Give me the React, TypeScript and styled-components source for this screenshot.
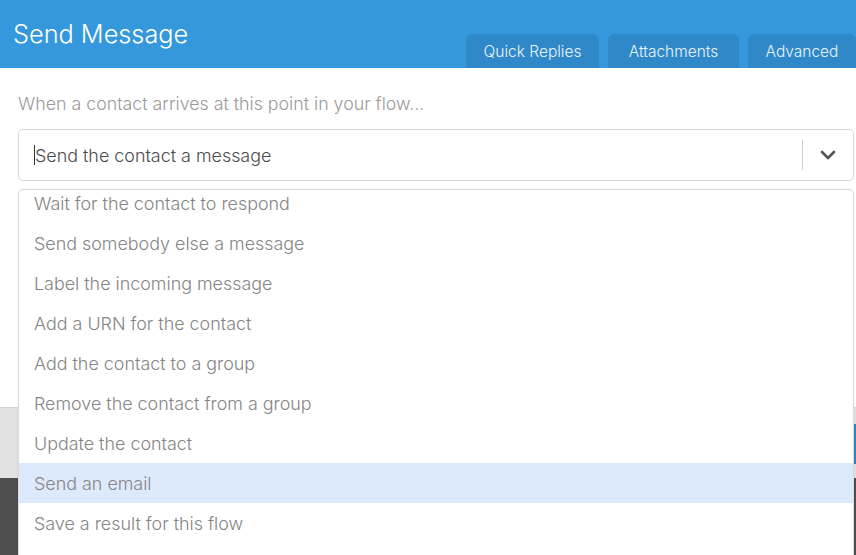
import React from "react";
import styled, { createGlobalStyle } from "styled-components";

const Global = createGlobalStyle`
  html, body { margin: 0; padding: 0; }
  body {
    width: 856px;
    height: 555px;
    overflow: hidden;
    background: #4f4f4f;
    font-family: Inter, Roboto, Arial, sans-serif;
    font-weight: 300;
  }
  * { box-sizing: border-box; }
`;

const Page = styled.div`
  position: relative;
  width: 856px;
  height: 555px;
  overflow: hidden;
  background: #4f4f4f;
`;

const Modal = styled.div`
  display: flex;
  flex-direction: column;
  width: 856px;
`;

const Header = styled.header`
  display: flex;
  align-items: stretch;
  justify-content: space-between;
  height: 68px;
  background: #3598dc;
  padding-left: 13px;
`;

const Title = styled.h1`
  margin: 0;
  align-self: center;
  margin-top: -2px;
  font-size: 25.3px;
  font-weight: 300;
  color: #ffffff;
`;

const Tabs = styled.nav`
  display: flex;
  align-items: flex-end;
  gap: 9px;
`;

const Tab = styled.div<{ $w: number }>`
  display: flex;
  align-items: center;
  justify-content: center;
  width: ${(p) => p.$w}px;
  height: 34px;
  background: #2f89c8;
  border-radius: 6px 6px 0 0;
  color: #eaf3fb;
  font-size: 15.5px;
  font-weight: 300;
  padding-top: 1px;
`;

const Body = styled.section`
  height: 339px;
  background: #ffffff;
  padding: 24px 2px 0 18px;
`;

const Label = styled.div`
  font-size: 17.8px;
  line-height: 24px;
  color: #9a9a9a;
  margin-bottom: 13px;
`;

const Select = styled.div`
  display: flex;
  align-items: center;
  height: 52px;
  border: 1px solid #d6d6d6;
  border-radius: 5px;
  background: #fff;
`;

const SelectValue = styled.div`
  flex: 1;
  display: flex;
  align-items: center;
  padding-left: 15px;
  font-size: 17.9px;
  color: #4a4a4a;
`;

const Caret = styled.span`
  display: inline-block;
  width: 1px;
  height: 20px;
  background: #333;
`;

const Separator = styled.span`
  width: 1px;
  height: 30px;
  background: #cfcfcf;
`;

const Indicator = styled.div`
  width: 50px;
  display: flex;
  align-items: center;
  justify-content: center;
  color: #555;
`;

const Footer = styled.footer`
  height: 71px;
  background: #e2e2e2;
  border-top: 1px solid #d4d4d4;
  display: flex;
  justify-content: flex-end;
  align-items: center;
`;

const PrimaryButton = styled.div`
  width: 90px;
  height: 40px;
  margin-top: 1px;
  background: #2b88c8;
  border-radius: 4px 0 0 4px;
`;

const Menu = styled.div`
  position: absolute;
  left: 18px;
  top: 189px;
  width: 836px;
  height: 380px;
  background: #fff;
  border: 1px solid #dadada;
  border-radius: 5px 5px 0 0;
  box-shadow: 0 0 3px rgba(0, 0, 0, 0.08);
  overflow: hidden;
`;

const MenuList = styled.div`
  margin-top: -7px;
`;

const MenuItem = styled.div<{ $active?: boolean }>`
  height: 40px;
  display: flex;
  align-items: center;
  padding-left: 15px;
  font-size: 17.9px;
  color: #858585;
  background: ${(p) => (p.$active ? "#ddeafc" : "transparent")};
`;

const items = [
  "Wait for the contact to respond",
  "Send somebody else a message",
  "Label the incoming message",
  "Add a URN for the contact",
  "Add the contact to a group",
  "Remove the contact from a group",
  "Update the contact",
  "Send an email",
  "Save a result for this flow",
];

export default function App() {
  return (
    <Page>
      <Global />
      <Modal>
        <Header>
          <Title>Send Message</Title>
          <Tabs>
            <Tab $w={133}>Quick Replies</Tab>
            <Tab $w={131}>Attachments</Tab>
            <Tab $w={108}>Advanced</Tab>
          </Tabs>
        </Header>
        <Body>
          <Label>When a contact arrives at this point in your flow...</Label>
          <Select>
            <SelectValue>
              <Caret />
              Send the contact a message
            </SelectValue>
            <Separator />
            <Indicator>
              <svg width="16" height="10" viewBox="0 0 16 10">
                <path d="M2 2 L8 8 L14 2" fill="none" stroke="#555" strokeWidth="2.6" strokeLinecap="round" strokeLinejoin="round" />
              </svg>
            </Indicator>
          </Select>
        </Body>
        <Footer>
          <PrimaryButton />
        </Footer>
      </Modal>
      <Menu>
        <MenuList>
          {items.map((t) => (
            <MenuItem key={t} $active={t === "Send an email"}>
              {t}
            </MenuItem>
          ))}
        </MenuList>
      </Menu>
    </Page>
  );
}
